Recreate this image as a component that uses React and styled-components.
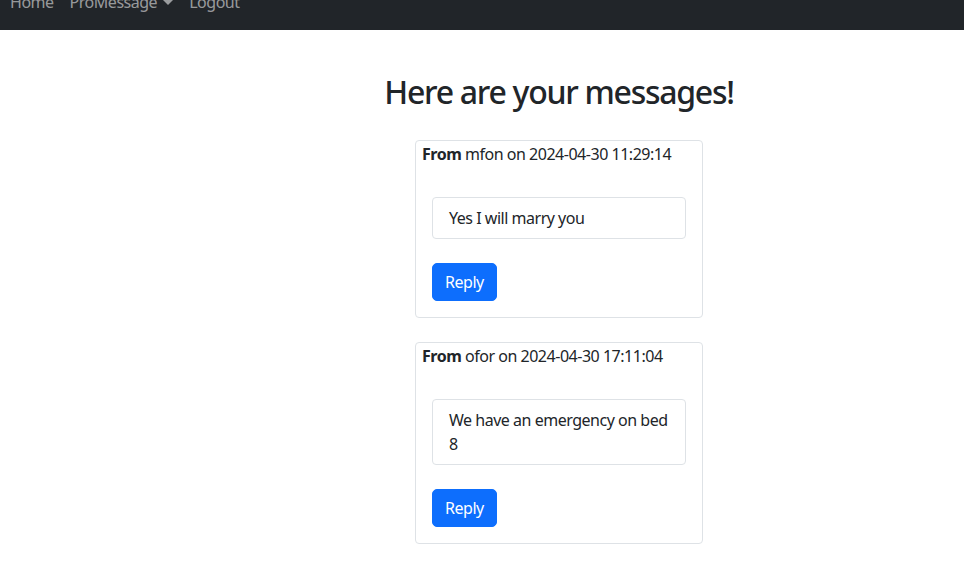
import React from 'react';
import styled, { createGlobalStyle } from 'styled-components';

const GlobalStyle = createGlobalStyle`
    body {
        margin: 0;
        font-family: "Segoe UI", "Noto Sans", sans-serif;
        font-size: 16px;
        line-height: 1.5;
        letter-spacing: -0.03em;
        color: #212529;
        background: #fff;
    }
`

const Navbar = styled.nav`
    height: 30px;
    overflow: hidden;
    background: #212529;
    display: flex;
    align-items: flex-end;
    padding: 0 2px 16px;
    box-sizing: border-box;
`

const NavLink = styled.a`
    color: rgba(255, 255, 255, 0.55);
    padding: 0 8px;
    line-height: 24px;
    text-decoration: none;
    display: flex;
    align-items: center;
    white-space: nowrap;

    ${({ $dropdown }) => $dropdown && `
        &::after {
            content: "";
            margin-left: 6px;
            border-top: 5px solid;
            border-left: 5px solid transparent;
            border-right: 5px solid transparent;
        }
    `}
`

const Main = styled.main`
    display: flex;
    flex-direction: column;
    align-items: center;
    padding-left: 154px;
    padding-top: 43px;
`

const Title = styled.h2`
    margin: 0 0 29px;
    font-size: 32px;
    font-weight: 500;
    line-height: 1.2;
    letter-spacing: -0.04em;
`

const Card = styled.div`
    width: 288px;
    box-sizing: border-box;
    border: 1px solid #dee2e6;
    border-radius: 4px;
    margin-bottom: 24px;
`

const CardHeader = styled.div`
    padding: 0 6px;
    line-height: 24px;
    margin-top: 1px;

    b { font-weight: 700; }
`

const CardBody = styled.div`
    padding: 31px 16px 16px;
`

const MessageBox = styled.div`
    border: 1px solid #dee2e6;
    border-radius: 4px;
    padding: 8px 16px;
    line-height: 24px;
    margin-bottom: 24px;
`

const Button = styled.button`
    font-family: inherit;
    font-size: 16px;
    letter-spacing: inherit;
    line-height: 24px;
    padding: 6px 12px;
    color: #fff;
    background: #0d6efd;
    border: 1px solid #0d6efd;
    border-radius: 5px;
    cursor: pointer;
`

const messages = [
    { from: "mfon", date: "2024-04-30 11:29:14", text: "Yes I will marry you" },
    { from: "ofor", date: "2024-04-30 17:11:04", text: "We have an emergency on bed 8" },
]

const App = () => {
    return (
        <>
            <GlobalStyle />
            <Navbar>
                <NavLink href="#">Home</NavLink>
                <NavLink href="#" $dropdown>ProMessage</NavLink>
                <NavLink href="#">Logout</NavLink>
            </Navbar>
            <Main>
                <Title>Here are your messages!</Title>
                {messages.map((m, i) => (
                    <Card key={i}>
                        <CardHeader><b>From</b> {m.from} on {m.date}</CardHeader>
                        <CardBody>
                            <MessageBox>{m.text}</MessageBox>
                            <Button>Reply</Button>
                        </CardBody>
                    </Card>
                ))}
            </Main>
        </>
    )
}

export default App
